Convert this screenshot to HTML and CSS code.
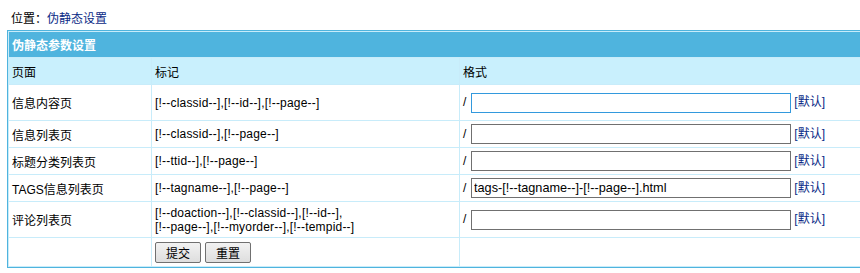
FILE: index.html
```html
<!DOCTYPE html>
<html lang="zh-CN">
<head>
    <meta charset="UTF-8">
    <title>伪静态设置</title>
    <link rel="stylesheet" href="styles.css">
</head>
<body>
    <div class="page">
        <div class="nav">位置：<a href="#">伪静态设置</a></div>

        <form class="wrap">
            <table class="tableborder">
                <tr class="header">
                    <td colspan="3">伪静态参数设置</td>
                </tr>
                <tr class="sub">
                    <td class="c1">页面</td>
                    <td class="c2">标记</td>
                    <td>格式</td>
                </tr>
                <tr class="tall">
                    <td>信息内容页</td>
                    <td class="tags">[!--classid--],[!--id--],[!--page--]</td>
                    <td><span class="slash">/</span><input type="text" class="focus"> <a href="#">[默认]</a></td>
                </tr>
                <tr>
                    <td>信息列表页</td>
                    <td class="tags">[!--classid--],[!--page--]</td>
                    <td><span class="slash">/</span><input type="text"> <a href="#">[默认]</a></td>
                </tr>
                <tr>
                    <td>标题分类列表页</td>
                    <td class="tags">[!--ttid--],[!--page--]</td>
                    <td><span class="slash">/</span><input type="text"> <a href="#">[默认]</a></td>
                </tr>
                <tr>
                    <td>TAGS信息列表页</td>
                    <td class="tags">[!--tagname--],[!--page--]</td>
                    <td><span class="slash">/</span><input type="text" value="tags-[!--tagname--]-[!--page--].html"> <a href="#">[默认]</a></td>
                </tr>
                <tr class="tall">
                    <td>评论列表页</td>
                    <td class="tags">[!--doaction--],[!--classid--],[!--id--],<br>[!--page--],[!--myorder--],[!--tempid--]</td>
                    <td><span class="slash">/</span><input type="text"> <a href="#">[默认]</a></td>
                </tr>
                <tr class="btns">
                    <td></td>
                    <td><button type="submit">提交</button><button type="reset">重置</button></td>
                    <td></td>
                </tr>
            </table>
        </form>
    </div>
</body>
</html>
```

FILE: styles.css
```css
* {
    margin: 0;
    padding: 0;
    box-sizing: border-box;
}
html, body {
    overflow: hidden;
    background: #fff;
}
body {
    font-family: "Liberation Sans", "Noto Sans CJK SC", sans-serif;
    font-size: 12px;
    color: #000;
}
a {
    color: #0a2a86;
    text-decoration: none;
}
.page {
    padding: 11px 0 0 7px;
}
.nav {
    padding-left: 4px;
    height: 19px;
    line-height: 16px;
}
.wrap {
    width: 900px;
}
.tableborder {
    width: 100%;
    border: 1px solid #4fb4de;
    border-spacing: 1px;
    background: #c8ecfa;
}
.tableborder td {
    background: #fff;
    padding: 0 3px;
    vertical-align: middle;
    height: 26px;
}
.header td {
    background: #4fb4de;
    color: #fff;
    font-weight: bold;
    height: 25px;
}
.sub td {
    background: #c9f0fd;
    height: 26px;
}
.c1 {
    width: 142px;
}
.c2 {
    width: 307px;
}
.tags {
    letter-spacing: 0.2px;
    line-height: 14px;
}
.tableborder tr.tall td {
    height: 35px;
}
.tableborder tr.btns td {
    height: 28px;
}
.slash {
    display: inline-block;
    width: 8px;
}
input {
    width: 320px;
    height: 20px;
    border: 1px solid #707070;
    padding: 0 2px;
    font-family: "Liberation Sans", sans-serif;
    font-size: 12.7px;
    vertical-align: middle;
    outline: none;
}
input.focus {
    border-color: #3399dd;
}
button {
    width: 46px;
    height: 21px;
    margin-right: 4px;
    border: 1px solid #707070;
    border-radius: 2px;
    background: linear-gradient(#f2f2f2, #dedede);
    font-family: "Noto Sans CJK SC", sans-serif;
    font-size: 12px;
    color: #000;
}
```
